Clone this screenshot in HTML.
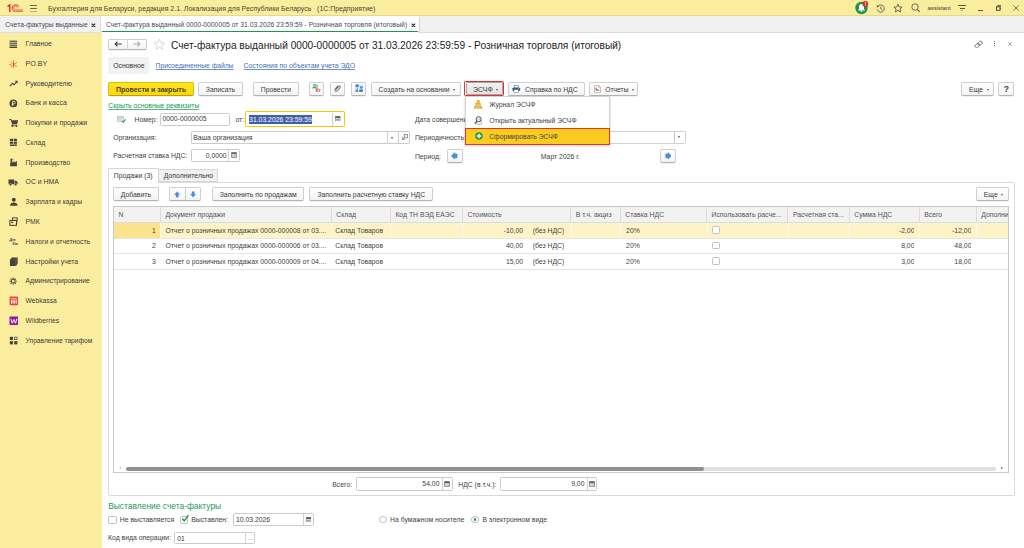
<!DOCTYPE html>
<html lang="ru">
<head>
<meta charset="utf-8">
<title>1C</title>
<style>
*{box-sizing:border-box;margin:0;padding:0}
html,body{width:1024px;height:548px;overflow:hidden;background:#fff}
body{font-family:"Liberation Sans",sans-serif;font-size:6.85px;color:#424242;position:relative;line-height:1}
.a{position:absolute;white-space:nowrap}
.t{position:absolute;white-space:nowrap;line-height:10px;height:10px}
#titlebar{left:0;top:0;width:1024px;height:16.2px;background:#fbed9e;border-bottom:.6px solid #e4d78f}
#tabbar{left:0;top:16.2px;width:1024px;height:17.1px;background:#f1f1f1;border-bottom:.7px solid #dedede}
#sidebar{left:0;top:33.3px;width:102px;height:515px;background:#fbed9e}
.btn{position:absolute;height:14.1px;border:1px solid #cfcfcf;border-bottom-color:#b3b3b3;border-radius:2px;background:linear-gradient(#ffffff,#f3f3f3);text-align:center;line-height:14.6px;white-space:nowrap;color:#3b3b3b;box-shadow:0 .5px .5px rgba(0,0,0,.12)}
.inp{position:absolute;border:1px solid #cbcbcb;border-radius:1.4px;background:#fff;line-height:10px;white-space:nowrap;color:#3b3b3b}
.lnk{color:#3f6fb5;text-decoration:underline;text-decoration-thickness:.5px;text-underline-offset:.8px;text-decoration-color:rgba(63,111,181,.75)}
.sb{position:absolute;left:25.6px;font-size:6.7px;white-space:nowrap;line-height:10px;height:10px;color:#3b3b3b}
.ic{position:absolute}
.th{position:absolute;top:0;height:15.6px;line-height:15px;border-right:1px solid #dcdcdc;padding-left:4.4px;color:#555;white-space:nowrap;overflow:hidden}
.td{position:absolute;height:15.6px;line-height:15.2px;white-space:nowrap;overflow:hidden}
.cb{position:absolute;width:7.8px;height:7.8px;border:1px solid #c2c2c2;border-radius:1.6px;background:#fff}
.dd{display:inline-block;width:0;height:0;border-left:1.7px solid transparent;border-right:1.7px solid transparent;border-top:2.2px solid #555;margin-left:3.4px;vertical-align:1px}
.dda{width:0;height:0;border-left:1.9px solid transparent;border-right:1.9px solid transparent;border-top:2.3px solid #4a4a4a}
</style>
</head>
<body>
<!-- ===== title bar ===== -->
<div class="a" id="titlebar"></div>
<div class="t" style="left:48.1px;top:3.9px;font-size:6.95px;color:#4a4433">Бухгалтерия для Беларуси, редакция 2.1. Локализация для Республики Беларусь&nbsp;&nbsp; (1С:Предприятие)</div>


<!-- 1C logo -->
<svg class="ic" style="left:6.6px;top:3.6px" width="16.6" height="8.8" viewBox="0 0 33.2 17.6">
<g fill="none" stroke="#e5322d">
<path d="M1 5.2L5.6 1.8V17" stroke-width="3"/>
<path d="M24.2 5.6A7.2 7.2 0 1 0 17.4 15.6H32.6" stroke-width="1.8"/>
<path d="M21.2 7.6A4 4 0 1 0 17.4 12H32.6" stroke-width="1.6"/>
</g></svg>
<!-- hamburger -->
<div class="a" style="left:29.8px;top:4.9px;width:7.6px;height:1px;background:#6a6554"></div>
<div class="a" style="left:29.8px;top:7.8px;width:7.6px;height:1px;background:#6a6554"></div>
<div class="a" style="left:29.8px;top:10.5px;width:7.6px;height:.9px;background:#b9b28c"></div>
<!-- right cluster -->
<svg class="ic" style="left:855.4px;top:1.4px" width="14" height="13.4" viewBox="0 0 28 26.8">
<circle cx="13" cy="14" r="12.4" fill="#1d9447"/>
<path d="M13 6.2c-3.2 0-5 2.4-5 5.4v4.2l-2.2 3h14.4l-2.2-3v-4.2c0-3-1.8-5.4-5-5.4z" fill="#fff"/><circle cx="13" cy="20.6" r="1.7" fill="#fff"/>
<circle cx="20.6" cy="5.8" r="5.6" fill="#e3262a"/>
<path d="M19.6 4.2L21 3V9" stroke="#fff" stroke-width="1.5" fill="none"/>
</svg>
<svg class="ic" style="left:875.6px;top:3.6px" width="9.4" height="9.4" viewBox="0 0 18.8 18.8"><g fill="none" stroke="#5a5546" stroke-width="1.7"><path d="M3.4 5.2A7.2 7.2 0 1 1 2.4 10.6"/><path d="M9.6 5V9.8L12.8 12"/></g><path d="M0.8 3L6 3.4L3 7.6Z" fill="#5a5546"/></svg>
<svg class="ic" style="left:893px;top:3px" width="10" height="10" viewBox="0 0 24 24"><path d="M12 2.8L14.8 9.3L21.8 10L16.5 14.6L18.1 21.4L12 17.8L5.9 21.4L7.5 14.6L2.2 10L9.2 9.3Z" fill="none" stroke="#5a5546" stroke-width="2.1" stroke-linejoin="round"/></svg>
<svg class="ic" style="left:911.4px;top:3.4px" width="9.6" height="9.6" viewBox="0 0 19.2 19.2"><circle cx="8" cy="8" r="6.4" fill="none" stroke="#5a5546" stroke-width="1.7"/><path d="M12.6 12.8L17.4 17.6" stroke="#5a5546" stroke-width="2.2"/></svg>
<div class="t" style="left:927.6px;top:3.4px;font-size:5.85px;color:#3f3b30">assistant</div>
<div class="a" style="left:958.2px;top:5.3px;width:8px;height:1px;background:#5a5546"></div>
<div class="a" style="left:959.8px;top:7.8px;width:4.8px;height:1px;background:#5a5546"></div>
<div class="a" style="left:961px;top:10px;width:0;height:0;border-left:1.3px solid transparent;border-right:1.3px solid transparent;border-top:1.6px solid #5a5546"></div>
<div class="a" style="left:978.2px;top:10.4px;width:5px;height:1px;background:#5a5546"></div>
<svg class="ic" style="left:995.8px;top:5.4px" width="5.6" height="5.8" viewBox="0 0 11.2 11.6"><rect x="1" y="3.6" width="7" height="7" fill="none" stroke="#45413a" stroke-width="1.9"/><path d="M3.4 3.4V1H10.2V8H8.2" fill="none" stroke="#45413a" stroke-width="1.6"/></svg>
<svg class="ic" style="left:1013.4px;top:5px" width="6.2" height="6.2" viewBox="0 0 12.4 12.4"><path d="M1 1L11.4 11.4M11.4 1L1 11.4" stroke="#5a5546" stroke-width="1.6"/></svg>

<!-- ===== tab bar ===== -->
<div class="a" id="tabbar"></div>
<div class="t" style="left:5.3px;top:20.2px;font-size:6.75px;color:#484a58">Счета-фактуры выданные</div>
<svg class="ic" style="left:91.2px;top:22.5px" width="4.8" height="4.8" viewBox="0 0 9.6 9.6"><path d="M1.2 1.2L8.4 8.4M8.4 1.2L1.2 8.4" stroke="#333" stroke-width="2.4"/></svg>
<div class="a" style="left:100.2px;top:16.8px;width:.7px;height:16.2px;background:#dcdcdc"></div>
<div class="a" style="left:100.9px;top:16.2px;width:318.4px;height:17.2px;background:#fff"></div>
<div class="a" style="left:419.3px;top:16.8px;width:.7px;height:16.2px;background:#d4d4d4"></div>
<div class="a" style="left:102px;top:30.8px;width:315.9px;height:1.4px;background:#169a48"></div>
<div class="t" style="left:105.9px;top:20.2px;font-size:6.8px;color:#484a58">Счет-фактура выданный 0000-0000005 от 31.03.2026 23:59:59 - Розничная торговля (итоговый)</div>
<svg class="ic" style="left:410.8px;top:22.5px" width="4.8" height="4.8" viewBox="0 0 9.6 9.6"><path d="M1.2 1.2L8.4 8.4M8.4 1.2L1.2 8.4" stroke="#333" stroke-width="2.4"/></svg>

<!-- ===== sidebar ===== -->
<div class="a" id="sidebar"></div>
<!--SB0-->
<svg class="ic" style="left:9.1px;top:39.8px" width="8.6" height="8.6" viewBox="0 0 16 16"><rect x="1" y="1.2" width="14" height="2.1" fill="#46423c"/><rect x="1" y="4.9" width="14" height="2.1" fill="#46423c"/><rect x="1" y="8.6" width="14" height="2.1" fill="#46423c"/><rect x="1" y="12.2" width="14" height="2.8" fill="#46423c"/></svg>
<div class="sb" style="top:39.2px;font-size:6.9px">Главное</div>
<svg class="ic" style="left:9.0px;top:59.5px" width="8.8" height="8.8" viewBox="0 0 16 16"><g stroke="#e23a30" stroke-width="1.25" fill="none" stroke-linecap="round"><path d="M8.2 1.2V14.8"/><path d="M8.2 7.6C10.6 7.2 12.6 6 14 4.6"/><path d="M8.2 8C10 9.4 11.6 11 13.6 11.4"/><path d="M8.2 8C6.8 9.8 5.4 11.2 3.2 12.2"/><path d="M6.2 6.2L3.8 4.4"/><path d="M1.6 8.2H3.4"/></g></svg>
<div class="sb" style="top:59.0px;font-size:7.1px">PO.BY</div>
<svg class="ic" style="left:8.8px;top:79.0px" width="9.2" height="9.2" viewBox="0 0 16 16"><path d="M1.5 12.5L6 7.5L9 10L13.5 4.5" stroke="#46423c" stroke-width="2" fill="none" stroke-linejoin="round"/><path d="M10 3.2H15V8.2Z" fill="#46423c"/></svg>
<div class="sb" style="top:78.7px;font-size:6.95px">Руководителю</div>
<svg class="ic" style="left:9.0px;top:98.9px" width="8.8" height="8.8" viewBox="0 0 16 16"><circle cx="8" cy="8" r="7" fill="#46423c"/><path d="M6.3 12.5V4.2H9.2a2.3 2.3 0 0 1 0 4.6H5.2M5.2 10.6H9" stroke="#fbed9e" stroke-width="1.5" fill="none"/></svg>
<div class="sb" style="top:98.4px;font-size:7.0px">Банк и касса</div>
<svg class="ic" style="left:8.6px;top:118.3px" width="9.6" height="9.6" viewBox="0 0 16 16"><path d="M0.6 1.8H3.8L4.6 3.8H15.4L13.4 10.4H5.4L2.8 3.4H0.6Z" fill="#46423c"/><path d="M5.2 10.4L4.4 12.2H13.6" stroke="#46423c" stroke-width="1.3" fill="none"/><circle cx="5.8" cy="13.6" r="1.6" fill="#46423c"/><circle cx="12.4" cy="13.6" r="1.6" fill="#46423c"/></svg>
<div class="sb" style="top:118.2px;font-size:6.95px">Покупки и продажи</div>
<svg class="ic" style="left:9.0px;top:138.4px" width="8.8" height="8.8" viewBox="0 0 16 16"><rect x="1.6" y="1.4" width="5.8" height="4" fill="#46423c"/><rect x="8.6" y="1.4" width="5.8" height="4" fill="#46423c"/><rect x="1.6" y="6.6" width="5.8" height="4" fill="#46423c"/><rect x="8.6" y="6.6" width="5.8" height="4" fill="#46423c"/><rect x="1.6" y="11.8" width="12.8" height="2.6" fill="#46423c"/></svg>
<div class="sb" style="top:137.9px;font-size:6.75px">Склад</div>
<svg class="ic" style="left:8.9px;top:158.1px" width="9" height="9" viewBox="0 0 16 16"><path d="M2 14.5V8.5L6 5.5V8.5L10 5.5V8.5L14 5.5V14.5Z" fill="#46423c"/><rect x="2.6" y="1.2" width="3" height="5.5" fill="#46423c"/><rect x="6.2" y="1.5" width="1.6" height="1.6" fill="#46423c"/></svg>
<div class="sb" style="top:157.7px;font-size:6.85px">Производство</div>
<svg class="ic" style="left:8.4px;top:177.3px" width="10" height="10" viewBox="0 0 16 16"><path d="M0.8 4H9.8V11.6H0.8Z" fill="#46423c"/><path d="M10.4 6H13.2L15.4 8.6V11.6H10.4Z" fill="#46423c"/><circle cx="4" cy="12" r="1.9" fill="#46423c" stroke="#fbed9e" stroke-width=".7"/><circle cx="12.2" cy="12" r="1.9" fill="#46423c" stroke="#fbed9e" stroke-width=".7"/></svg>
<div class="sb" style="top:177.4px;font-size:6.9px">ОС и НМА</div>
<svg class="ic" style="left:8.6px;top:197.3px" width="9.6" height="9.6" viewBox="0 0 16 16"><circle cx="8" cy="4.6" r="3.3" fill="#46423c"/><path d="M1.8 14.4C1.8 10.4 4.4 9 8 9S14.2 10.4 14.2 14.4Z" fill="#46423c"/></svg>
<div class="sb" style="top:197.2px;font-size:6.75px">Зарплата и кадры</div>
<svg class="ic" style="left:8.8px;top:217.2px" width="9.2" height="9.2" viewBox="0 0 16 16"><rect x="1.6" y="6" width="11.4" height="8.6" fill="none" stroke="#46423c" stroke-width="1.8"/><rect x="6" y="1.4" width="8.2" height="4.4" fill="none" stroke="#46423c" stroke-width="1.6"/><rect x="3.8" y="8.2" width="3.4" height="2.4" fill="#46423c"/><path d="M13.6 5.8V12.5" stroke="#46423c" stroke-width="1.6"/></svg>
<div class="sb" style="top:216.9px;font-size:6.9px">РМК</div>
<svg class="ic" style="left:8.9px;top:237.1px" width="9" height="9" viewBox="0 0 16 16"><text x="1" y="7" font-family="Liberation Sans" font-size="6.6" font-style="italic" font-weight="bold" fill="#46423c">Дт</text><text x="6.4" y="14.2" font-family="Liberation Sans" font-size="6.6" font-style="italic" font-weight="bold" fill="#46423c">Кт</text></svg>
<div class="sb" style="top:236.7px;font-size:6.75px">Налоги и отчетность</div>
<svg class="ic" style="left:8.6px;top:256.6px" width="9.6" height="9.6" viewBox="0 0 16 16"><path d="M1.6 4.6L4.6 1H14.4V11.4L11.4 15H1.6Z" fill="#46423c"/><path d="M11.4 4.6L14.4 1" stroke="#8d8674" stroke-width=".8"/><path d="M11.4 4.6V15" stroke="#8d8674" stroke-width=".7"/><path d="M1.6 4.6H11.4" stroke="#6d675a" stroke-width=".6"/></svg>
<div class="sb" style="top:256.5px;font-size:6.8px">Настройки учета</div>
<svg class="ic" style="left:9.2px;top:276.9px" width="8.4" height="8.4" viewBox="0 0 16 16"><circle cx="8" cy="8" r="3.6" fill="none" stroke="#46423c" stroke-width="2"/><g stroke="#46423c" stroke-width="2"><path d="M8 1V3.6M8 12.4V15M1 8H3.6M12.4 8H15M3.05 3.05L4.9 4.9M11.1 11.1L12.95 12.95M3.05 12.95L4.9 11.1M11.1 4.9L12.95 3.05"/></g></svg>
<div class="sb" style="top:276.2px;font-size:6.72px">Администрирование</div>
<svg class="ic" style="left:8.5px;top:296.0px" width="9.8" height="9.8" viewBox="0 0 16 16"><rect x="1" y="1" width="14" height="14" rx="2" fill="#e8423a"/><rect x="3.2" y="4" width="9.6" height="1.3" fill="#fff"/><g fill="#fff"><rect x="3.4" y="6.6" width="1.3" height="6"/><rect x="6" y="6.6" width="1.3" height="6"/><rect x="8.6" y="6.6" width="1.3" height="6"/><rect x="11.2" y="6.6" width="1.3" height="6"/><rect x="3.4" y="9" width="9" height="1"/></g></svg>
<div class="sb" style="top:296.0px;font-size:6.7px">Webkassa</div>
<svg class="ic" style="left:8.5px;top:315.7px" width="9.8" height="9.8" viewBox="0 0 16 16"><defs><linearGradient id="wb" x1="0" y1="0" x2="1" y2="1"><stop offset="0" stop-color="#7a1fa8"/><stop offset="1" stop-color="#a3188f"/></linearGradient></defs><rect x="0.8" y="0.8" width="14.4" height="14.4" rx="1.2" fill="url(#wb)"/><path d="M3 4.4L5.4 11.8L8 5.6L10.6 11.8L13 4.4" stroke="#fff" stroke-width="1.5" fill="none" stroke-linejoin="round"/></svg>
<div class="sb" style="top:315.7px;font-size:6.7px">Wildberries</div>
<svg class="ic" style="left:8.8px;top:335.8px" width="9.2" height="9.2" viewBox="0 0 16 16"><rect x="1.4" y="1.4" width="5.6" height="5.6" fill="#46423c"/><rect x="9.6" y="2" width="4.4" height="4.4" fill="none" stroke="#46423c" stroke-width="1.2"/><rect x="1.4" y="9" width="5.6" height="5.6" fill="#46423c"/><rect x="9" y="9" width="5.6" height="5.6" fill="#46423c"/></svg>
<div class="sb" style="top:335.5px;font-size:6.66px">Управление тарифом</div>
<!--SB1-->
<!-- ===== main content placeholder ===== -->

<!-- ===== form header ===== -->
<div class="btn" style="left:108px;top:38.5px;width:39px;height:11.9px;border-color:#cdcdcd;border-bottom-color:#b4b4b4"></div>
<div class="a" style="left:127.4px;top:39.2px;width:.8px;height:10.4px;background:#d6d6d6"></div>
<svg class="ic" style="left:114px;top:41.4px" width="8" height="6" viewBox="0 0 16 12"><path d="M15.4 6H3M7 1.4L2.2 6L7 10.6" stroke="#3a3a3a" stroke-width="2.1" fill="none"/></svg>
<svg class="ic" style="left:133.4px;top:41.4px" width="8" height="6" viewBox="0 0 16 12"><path d="M.6 6H13M9 1.4L13.8 6L9 10.6" stroke="#a9a9a9" stroke-width="2.1" fill="none"/></svg>
<svg class="ic" style="left:152.8px;top:37.9px" width="12.8" height="12.4" viewBox="0 0 24 24"><path d="M12 2.5L14.9 9.2L22 9.9L16.6 14.6L18.2 21.6L12 17.9L5.8 21.6L7.4 14.6L2 9.9L9.1 9.2Z" fill="#fff" stroke="#c6c6c6" stroke-width="1.3" stroke-linejoin="round"/></svg>
<div class="a" style="left:171.1px;top:39.8px;font-size:10.17px;line-height:12.5px;color:#222">Счет-фактура выданный 0000-0000005 от 31.03.2026 23:59:59 - Розничная торговля (итоговый)</div>
<svg class="ic" style="left:973.8px;top:39.6px" width="9.4" height="8.8" viewBox="0 0 18.8 17.6"><g transform="rotate(-38 9.4 8.8)" stroke="#6a6a6a" stroke-width="1.6" fill="none"><rect x="1" y="5.6" width="9.6" height="6.4" rx="3.2"/><rect x="8.2" y="5.6" width="9.6" height="6.4" rx="3.2"/></g></svg>
<div class="a" style="left:993.6px;top:41.1px;width:1.3px;height:1.3px;background:#5f5f5f;box-shadow:0 2.15px 0 #5f5f5f,0 4.3px 0 #5f5f5f"></div>
<svg class="ic" style="left:1008.2px;top:42px" width="4.2" height="4.2" viewBox="0 0 8.4 8.4"><path d="M.8 .8L7.6 7.6M7.6 .8L.8 7.6" stroke="#787878" stroke-width="1.5"/></svg>

<!-- sub tabs -->
<div class="a" style="left:108px;top:56.8px;width:41.2px;height:17.6px;background:#f2f2f2;border-radius:1.6px"></div>
<div class="t" style="left:113.2px;top:61.3px;color:#333">Основное</div>
<div class="t lnk" style="left:155.6px;top:61.3px;font-size:6.72px">Присоединенные файлы</div>
<div class="t lnk" style="left:243.6px;top:61.3px">Состояния по объектам учета ЭДО</div>

<!-- command bar -->
<div class="btn" style="left:108px;top:81.5px;width:86px;background:linear-gradient(#ffe521,#fbd90a);border-color:#dcbc00;border-bottom-color:#bfa000;font-weight:bold;font-size:7px;color:#4a4126">Провести и закрыть</div>
<div class="btn" style="left:198.2px;top:81.5px;width:44.6px">Записать</div>
<div class="btn" style="left:253.2px;top:81.5px;width:45.4px">Провести</div>
<div class="btn" style="left:308.8px;top:81.5px;width:15.4px"></div>
<div class="btn" style="left:329.8px;top:81.5px;width:15.4px"></div>
<div class="btn" style="left:350.6px;top:81.5px;width:15.4px"></div>
<div class="btn" style="left:371px;top:81.5px;width:89.6px;text-align:left;padding-left:6.6px">Создать на основании<span class="dd"></span></div>
<div class="btn" style="left:465.6px;top:82px;width:37px;height:13px;line-height:13.4px;text-align:left;padding-left:6.4px;background:linear-gradient(#f1f1f1,#e4e4e4);border-color:#a8a8a8;border-radius:1px;font-size:7px">ЭСЧФ<span class="dd"></span></div>
<div class="btn" style="left:508.4px;top:81.5px;width:76.2px;text-align:left;padding-left:15.6px">Справка по НДС</div>
<div class="btn" style="left:589px;top:81.5px;width:49px;text-align:left;padding-left:15.2px;font-size:6.78px">Отчеты<span class="dd"></span></div>
<div class="btn" style="left:961.2px;top:81.5px;width:32.8px;text-align:left;padding-left:6.8px">Еще<span class="dd" style="margin-left:4.4px"></span></div>
<div class="btn" style="left:998.4px;top:81.5px;width:15.8px;font-weight:bold;color:#3a3a3a;font-size:8.6px;line-height:13.6px">?</div>

<div class="t" style="left:108.3px;top:101.3px;color:#14994f;text-decoration:underline;text-decoration-thickness:.45px;text-underline-offset:.6px;text-decoration-color:rgba(20,153,79,.7);font-size:6.83px">Скрыть основные реквизиты</div>

<!-- fields left -->
<div class="t" style="left:134.6px;top:115px">Номер:</div>
<div class="inp" style="left:160px;top:112.8px;width:69.6px;height:12.8px;padding:.3px 1.4px">0000-0000005</div>
<div class="t" style="left:235.4px;top:115px">от:</div>
<div class="a" style="left:245.2px;top:111.4px;width:100px;height:15.8px;border:1.3px solid #f5c800;border-radius:1.4px;background:#fff"></div>
<div class="a" style="left:248.9px;top:115px;width:63px;height:8.6px;background:#3f5fa8"></div>
<div class="t" style="left:249.1px;top:114.5px;color:#fff">31.03.2026 23:59:59</div>
<div class="a" style="left:332.3px;top:113px;width:.8px;height:12.6px;background:#d0d0d0"></div>

<div class="t" style="left:113.2px;top:133px">Организация:</div>
<div class="inp" style="left:191px;top:131px;width:207.6px;height:12.6px;padding:.5px 1.2px;border-radius:1.4px 0 0 1.4px">Ваша организация</div>
<div class="a" style="left:387.2px;top:131.6px;width:.8px;height:11.4px;background:#d0d0d0"></div>
<div class="inp" style="left:398.2px;top:131px;width:11.6px;height:12.6px;border-radius:0 1.4px 1.4px 0"></div>
<div class="a dda" style="left:390.5px;top:136.5px"></div>

<div class="t" style="left:113.2px;top:151px">Расчетная ставка НДС:</div>
<div class="inp" style="left:191px;top:149.3px;width:49px;height:12.4px;padding:.6px 12.4px .5px 0;text-align:right">0,0000</div>
<div class="a" style="left:228.2px;top:149.8px;width:.8px;height:11.2px;background:#d0d0d0"></div>


<!-- command bar icons -->
<div class="a" style="left:312.4px;top:83.6px;font-size:4.9px;font-weight:bold;color:#1f9a4c;line-height:5px;letter-spacing:-.2px">Дт</div>
<div class="a" style="left:315.8px;top:88.3px;font-size:4.5px;font-weight:bold;color:#e8353a;line-height:5px;letter-spacing:-.1px">Кт</div>
<svg class="ic" style="left:333.2px;top:83.9px" width="9" height="9" viewBox="0 0 18 18"><g transform="rotate(42 9 9)"><path d="M6.2 5.2V12.4a2.8 2.8 0 0 0 5.6 0V4.4a1.9 1.9 0 0 0-3.8 0V11.6" fill="none" stroke="#6c6c6c" stroke-width="1.9" stroke-linecap="round"/></g></svg>
<svg class="ic" style="left:354.6px;top:84.3px" width="8.4" height="8.4" viewBox="0 0 16.8 17.2"><rect x=".6" y=".6" width="15.6" height="16" fill="#dfeaf8"/><rect x="1" y="1" width="6.4" height="4.6" fill="#3f74c4"/><rect x="9.6" y="4.6" width="6.2" height="4.4" fill="#5a8ed6"/><rect x="1" y="11.4" width="5" height="4.6" fill="#4a80cc"/><rect x="8.4" y="11.8" width="7.4" height="4.4" fill="#3f74c4"/><path d="M4 5.6V9H9M12.4 9V11.8" stroke="#2f62ae" stroke-width="1.3" fill="none"/><rect x="6" y="6.4" width="3" height="4.2" fill="#fff"/><rect x="11.6" y="10.2" width="1.8" height="1.8" fill="#3db36b"/></svg>
<svg class="ic" style="left:512px;top:84.8px" width="8.6" height="8" viewBox="0 0 17.2 16.4"><rect x="4.2" y=".8" width="8.8" height="5" fill="#fff" stroke="#5a6b86" stroke-width="1.2"/><rect x=".8" y="5.4" width="15.6" height="6.8" rx="1.4" fill="#3d5580"/><rect x="3.8" y="9.6" width="9.6" height="6" fill="#fff" stroke="#5a6b86" stroke-width="1.1"/><rect x="12.8" y="6.8" width="1.8" height="1.3" fill="#cfe0ff"/></svg>
<svg class="ic" style="left:594px;top:84.6px" width="7" height="8" viewBox="0 0 14 16.4"><path d="M1 .8H9.4L13 4.4V15.6H1Z" fill="#fff" stroke="#8d8d8d" stroke-width="1.2"/><path d="M9.2 1V4.6H12.8" fill="none" stroke="#8d8d8d" stroke-width="1"/><rect x="3.2" y="5.4" width="2.2" height="6.4" fill="#d9343a"/><rect x="6.2" y="8" width="2.2" height="3.8" fill="#3aa655"/><rect x="9" y="9.6" width="1.8" height="2.2" fill="#d9343a"/></svg>

<!-- field icons -->
<svg class="ic" style="left:116.8px;top:116.2px" width="9.2" height="7" viewBox="0 0 18.4 14"><rect x=".6" y=".8" width="12.6" height="9.6" fill="#f1f1f1" stroke="#9f9f9f" stroke-width="1"/><path d="M2.4 3.4H11.4M2.4 5.6H11.4M2.4 7.8H8" stroke="#a9a9a9" stroke-width="1"/><path d="M9.6 9.6L12.4 12.4L17.4 6.6" fill="none" stroke="#27a24c" stroke-width="2.3"/></svg>
<svg class="ic cal" style="left:335.2px;top:116.1px" width="5.4" height="5.3" viewBox="0 0 12 11.6"><rect x=".7" y=".7" width="10.6" height="10.2" rx="1" fill="#fff" stroke="#4d4d4d" stroke-width="1.4"/><rect x=".7" y=".7" width="10.6" height="3.4" fill="#4d4d4d"/><rect x="2.6" y="5.6" width="6.8" height="3.4" fill="#9a9a9a"/></svg>
<svg class="ic" style="left:401.6px;top:134.2px" width="6" height="6.2" viewBox="0 0 12 12.4"><rect x="4.4" y=".8" width="6.8" height="6.8" fill="none" stroke="#6a6a6a" stroke-width="1.4"/><path d="M1 11.4L5.4 7" stroke="#6a6a6a" stroke-width="1.6"/><path d="M1 5.4V11.4H7" stroke="#6a6a6a" stroke-width="1.2" fill="none"/></svg>
<svg class="ic" style="left:231px;top:152px" width="5.8" height="5.8" viewBox="0 0 11.6 11.6"><rect x=".7" y=".7" width="10.2" height="10.2" rx=".8" fill="#c9c9c9" stroke="#5e5e5e" stroke-width="1.3"/><rect x="1.2" y="1.2" width="9.2" height="2.6" fill="#5e5e5e"/><path d="M2.6 6.2H9M2.6 8.4H9" stroke="#f2f2f2" stroke-width="1.1" stroke-dasharray="1.4 1"/></svg>

<!-- fields right -->
<div class="t" style="left:414.9px;top:114.6px">Дата совершения:</div>
<div class="t" style="left:414.9px;top:132.9px">Периодичность:</div>
<div class="inp" style="left:470px;top:130.6px;width:216.4px;height:13.2px;border-color:#d2d2d2"></div>
<div class="a" style="left:674.3px;top:131.2px;width:.8px;height:12px;background:#c8c8c8"></div>
<div class="a dda" style="left:678.2px;top:136.3px"></div>
<div class="t" style="left:414.9px;top:151.8px">Период:</div>
<div class="btn" style="left:446.6px;top:149.2px;width:16px;height:13.4px"></div>
<svg class="ic" style="left:451.3px;top:151.7px" width="6.8" height="7.8" viewBox="0 0 14 13.6" preserveAspectRatio="none"><path d="M.8 6.8L7.6.8V3.4H12.6V10.2H7.6V12.8Z" fill="#4a8fdb" stroke="#3a78c2" stroke-width=".8"/></svg>
<div class="btn" style="left:660.2px;top:149.2px;width:15.8px;height:13.4px"></div>
<svg class="ic" style="left:664.7px;top:151.7px" width="6.8" height="7.8" viewBox="0 0 14 13.6" preserveAspectRatio="none"><path d="M13.2 6.8L6.4.8V3.4H1.4V10.2H6.4V12.8Z" fill="#4a8fdb" stroke="#3a78c2" stroke-width=".8"/></svg>
<div class="t" style="left:540.8px;top:151.8px">Март 2026 г.</div>


<!-- ===== pages (tabs) ===== -->
<div class="a" style="left:108px;top:182px;width:906.9px;height:314.2px;border:1px solid #dadada;border-radius:0 1.4px 1.4px 1.4px;background:#fff"></div>
<div class="a" style="left:158.8px;top:168.7px;width:59.4px;height:13.8px;background:#f1f1f1;border:1px solid #d6d6d6;border-left:none;border-radius:0 1.4px 0 0"></div>
<div class="a" style="left:108px;top:167.9px;width:51.2px;height:15.1px;background:#fff;border:1px solid #d6d6d6;border-bottom:none;border-radius:1.4px 1.4px 0 0"></div>
<div class="t" style="left:113.8px;top:170.8px;color:#3a3a3a">Продажи (3)</div>
<div class="t" style="left:163.8px;top:170.8px;color:#3a3a3a">Дополнительно</div>

<div class="btn" style="left:112.9px;top:187.2px;width:45.9px;height:14px;line-height:13.7px">Добавить</div>
<div class="btn" style="left:169.4px;top:187.2px;width:31.6px;height:14px"></div>
<div class="a" style="left:185.1px;top:188px;width:.8px;height:12.4px;background:#cfcfcf"></div>
<svg class="ic" style="left:174.1px;top:191.4px" width="6.2" height="6.8" viewBox="0 0 16 17"><path d="M8 1.5L14.6 9H10.8V15.4H5.2V9H1.4Z" fill="#4a90e0" stroke="#3b7ccc" stroke-width="1"/></svg>
<svg class="ic" style="left:190px;top:191.4px" width="6.2" height="6.8" viewBox="0 0 16 17"><path d="M8 15.5L14.6 8H10.8V1.6H5.2V8H1.4Z" fill="#4a90e0" stroke="#3b7ccc" stroke-width="1"/></svg>
<div class="btn" style="left:212px;top:187.2px;width:92.4px;height:14px;line-height:13.7px">Заполнить по продажам</div>
<div class="btn" style="left:309.2px;top:187.2px;width:124.2px;height:14px;line-height:13.7px">Заполнить расчетную ставку НДС</div>
<div class="btn" style="left:976.2px;top:187.3px;width:32.4px;height:14px;line-height:13.7px;text-align:left;padding-left:6.6px">Еще<span class="dd"></span></div>

<!-- table -->
<div class="a" style="left:113.1px;top:206.2px;width:895.5px;height:266.4px;border:1px solid #c9c9c9;background:#fff;overflow:hidden">
<div class="a" style="left:0;top:0;width:895.0px;height:15.6px;background:#f2f2f2;border-bottom:1px solid #dcdcdc"></div>
<div class="th" style="left:0.0px;width:46.9px">N</div>
<div class="th" style="left:46.9px;width:170.9px">Документ продажи</div>
<div class="th" style="left:217.8px;width:59.1px">Склад</div>
<div class="th" style="left:276.9px;width:72.0px">Код ТН ВЭД ЕАЭС</div>
<div class="th" style="left:348.9px;width:108.4px">Стоимость</div>
<div class="th" style="left:457.3px;width:49.5px">В т.ч. акциз</div>
<div class="th" style="left:506.8px;width:86.2px">Ставка НДС</div>
<div class="th" style="left:593.0px;width:81.4px">Использовать расче...</div>
<div class="th" style="left:674.4px;width:61.4px">Расчетная ста...</div>
<div class="th" style="left:735.8px;width:69.9px">Сумма НДС</div>
<div class="th" style="left:805.7px;width:57.0px">Всего</div>
<div class="th" style="left:862.7px;width:32.1px;border-right:none">Дополни</div>
<div class="a" style="left:0;top:15.6px;width:893.6px;height:15.6px;background:#fdf3c6"></div>
<div class="a" style="left:0;top:15.6px;width:46.9px;height:15.6px;background:#fce48e"></div>
<div class="a" style="left:46.4px;top:15.6px;width:.7px;height:15.6px;background:#fffbe8"></div>
<div class="a" style="left:217.3px;top:15.6px;width:.7px;height:15.6px;background:#fffbe8"></div>
<div class="a" style="left:276.4px;top:15.6px;width:.7px;height:15.6px;background:#fffbe8"></div>
<div class="a" style="left:348.4px;top:15.6px;width:.7px;height:15.6px;background:#fffbe8"></div>
<div class="a" style="left:456.8px;top:15.6px;width:.7px;height:15.6px;background:#fffbe8"></div>
<div class="a" style="left:506.3px;top:15.6px;width:.7px;height:15.6px;background:#fffbe8"></div>
<div class="a" style="left:592.5px;top:15.6px;width:.7px;height:15.6px;background:#fffbe8"></div>
<div class="a" style="left:673.9px;top:15.6px;width:.7px;height:15.6px;background:#fffbe8"></div>
<div class="a" style="left:735.3px;top:15.6px;width:.7px;height:15.6px;background:#fffbe8"></div>
<div class="a" style="left:805.2px;top:15.6px;width:.7px;height:15.6px;background:#fffbe8"></div>
<div class="a" style="left:862.2px;top:15.6px;width:.7px;height:15.6px;background:#fffbe8"></div>
<div class="a" style="left:0;top:30.6px;width:893.6px;height:.7px;background:#e6e6e6"></div>
<div class="td" style="left:0;top:15.6px;width:41.8px;text-align:right">1</div>
<div class="td" style="left:51.3px;top:15.6px;width:166px">Отчет о розничных продажах 0000-000008 от 03....</div>
<div class="td" style="left:221.2px;top:15.6px">Склад Товаров</div>
<div class="td" style="left:348.9px;top:15.6px;width:60.1px;text-align:right">-10,00</div>
<div class="td" style="left:418.6px;top:15.6px">(без НДС)</div>
<div class="td" style="left:512.0px;top:15.6px">20%</div>
<div class="cb" style="left:597.7px;top:18.9px"></div>
<div class="td" style="left:735.8px;top:15.6px;width:64.6px;text-align:right">-2,00</div>
<div class="td" style="left:805.7px;top:15.6px;width:51.7px;text-align:right">-12,00</div>
<div class="a" style="left:0;top:46.2px;width:893.6px;height:.7px;background:#e6e6e6"></div>
<div class="td" style="left:0;top:31.2px;width:41.8px;text-align:right">2</div>
<div class="td" style="left:51.3px;top:31.2px;width:166px">Отчет о розничных продажах 0000-000006 от 03....</div>
<div class="td" style="left:221.2px;top:31.2px">Склад Товаров</div>
<div class="td" style="left:348.9px;top:31.2px;width:60.1px;text-align:right">40,00</div>
<div class="td" style="left:418.6px;top:31.2px">(без НДС)</div>
<div class="td" style="left:512.0px;top:31.2px">20%</div>
<div class="cb" style="left:597.7px;top:34.5px"></div>
<div class="td" style="left:735.8px;top:31.2px;width:64.6px;text-align:right">8,00</div>
<div class="td" style="left:805.7px;top:31.2px;width:51.7px;text-align:right">48,00</div>
<div class="a" style="left:0;top:61.8px;width:893.6px;height:.7px;background:#e6e6e6"></div>
<div class="td" style="left:0;top:46.8px;width:41.8px;text-align:right">3</div>
<div class="td" style="left:51.3px;top:46.8px;width:166px">Отчет о розничных продажах 0000-000009 от 04....</div>
<div class="td" style="left:221.2px;top:46.8px">Склад Товаров</div>
<div class="td" style="left:348.9px;top:46.8px;width:60.1px;text-align:right">15,00</div>
<div class="td" style="left:418.6px;top:46.8px">(без НДС)</div>
<div class="td" style="left:512.0px;top:46.8px">20%</div>
<div class="cb" style="left:597.7px;top:50.1px"></div>
<div class="td" style="left:735.8px;top:46.8px;width:64.6px;text-align:right">3,00</div>
<div class="td" style="left:805.7px;top:46.8px;width:51.7px;text-align:right">18,00</div>
<!-- scrollbar -->
<div class="a" style="left:12.2px;top:259.4px;width:869.6px;height:4px;background:#e0e0e0;border-radius:2px"></div>
<div class="a" style="left:12.2px;top:259.4px;width:577.6px;height:4px;background:#909090;border-radius:2px"></div>
<div class="a" style="left:5.4px;top:259.8px;width:0;height:0;border-top:1.7px solid transparent;border-bottom:1.7px solid transparent;border-right:2.2px solid #b5b5b5"></div>
<div class="a" style="left:887.4px;top:259.8px;width:0;height:0;border-top:1.7px solid transparent;border-bottom:1.7px solid transparent;border-left:2.2px solid #4a4a4a"></div>
</div>

<!-- totals -->
<div class="t" style="left:332.3px;top:479.5px">Всего:</div>
<div class="inp" style="left:356px;top:477.3px;width:96.5px;height:13.3px;padding:1.2px 12px 0 0;text-align:right">54,00</div>
<div class="a" style="left:441.5px;top:477.9px;width:.8px;height:12.1px;background:#d0d0d0"></div>
<svg class="ic" style="left:443.9px;top:480.6px" width="5.8" height="6.2" viewBox="0 0 11.6 11.6" preserveAspectRatio="none"><rect x=".7" y=".7" width="10.2" height="10.2" rx=".8" fill="#c9c9c9" stroke="#5e5e5e" stroke-width="1.3"/><rect x="1.2" y="1.2" width="9.2" height="2.6" fill="#5e5e5e"/><path d="M2.6 6.2H9M2.6 8.4H9" stroke="#f2f2f2" stroke-width="1.1" stroke-dasharray="1.4 1"/></svg>
<div class="t" style="left:458.2px;top:479.5px">НДС (в т.ч.):</div>
<div class="inp" style="left:500.2px;top:477.3px;width:97.3px;height:13.3px;padding:1.2px 12px 0 0;text-align:right">9,00</div>
<div class="a" style="left:586.5px;top:477.9px;width:.8px;height:12.1px;background:#d0d0d0"></div>
<svg class="ic" style="left:589px;top:480.6px" width="5.8" height="6.2" viewBox="0 0 11.6 11.6" preserveAspectRatio="none"><rect x=".7" y=".7" width="10.2" height="10.2" rx=".8" fill="#c9c9c9" stroke="#5e5e5e" stroke-width="1.3"/><rect x="1.2" y="1.2" width="9.2" height="2.6" fill="#5e5e5e"/><path d="M2.6 6.2H9M2.6 8.4H9" stroke="#f2f2f2" stroke-width="1.1" stroke-dasharray="1.4 1"/></svg>

<!-- bottom group -->
<div class="t" style="left:108.2px;top:501.2px;font-size:8.43px;color:#1f9a57">Выставление счета-фактуры</div>
<div class="cb" style="left:108.4px;top:515.5px;width:8.2px;height:8.2px"></div>
<div class="t" style="left:119.8px;top:514.6px">Не выставляется</div>
<div class="cb" style="left:180px;top:515.5px;width:8.2px;height:8.2px"></div>
<svg class="ic" style="left:180.8px;top:513.6px" width="8.6" height="8.8" viewBox="0 0 16 16"><path d="M2.4 8.2L6 12.6L13.8 1.8" stroke="#169a42" stroke-width="2.5" fill="none"/></svg>
<div class="t" style="left:191.2px;top:514.6px">Выставлен:</div>
<div class="inp" style="left:233px;top:513.2px;width:80.8px;height:12.6px;padding:.9px 1.9px">10.03.2026</div>
<div class="a" style="left:302.6px;top:513.8px;width:.8px;height:11.4px;background:#d0d0d0"></div>
<svg class="ic" style="left:305.5px;top:516.5px" width="5.4" height="5.3" viewBox="0 0 12 11.6"><rect x=".7" y=".7" width="10.6" height="10.2" rx="1" fill="#fff" stroke="#4d4d4d" stroke-width="1.4"/><rect x=".7" y=".7" width="10.6" height="3.4" fill="#4d4d4d"/><rect x="2.6" y="5.6" width="6.8" height="3.4" fill="#9a9a9a"/></svg>
<div class="a" style="left:379.3px;top:515.5px;width:7.8px;height:7.8px;border:1px solid #bcbcbc;border-radius:50%;background:#fff"></div>
<div class="t" style="left:390px;top:514.6px">На бумажном носителе</div>
<div class="a" style="left:471.2px;top:515.5px;width:7.8px;height:7.8px;border:1px solid #b4b4b4;border-radius:50%;background:#fff"></div>
<div class="a" style="left:473.7px;top:518px;width:2.8px;height:2.8px;border-radius:50%;background:#12943f"></div>
<div class="t" style="left:482.4px;top:514.6px">В электронном виде</div>
<div class="t" style="left:108px;top:533.4px">Код вида операции:</div>
<div class="inp" style="left:174.2px;top:531.9px;width:81.3px;height:11.9px;padding:.8px 2px">01</div>
<div class="a" style="left:244.6px;top:532.5px;width:.8px;height:10.7px;background:#d4d4d4"></div>
<div class="t" style="left:247.6px;top:533.2px;color:#9a9a9a;letter-spacing:.2px">...</div>

<!-- ===== dropdown menu ===== -->
<div class="a" style="left:465.4px;top:95.6px;width:144.4px;height:49.6px;background:#fff;border:1px solid #d2d2d2;box-shadow:0 1px 2.5px rgba(0,0,0,.2)"></div>
<div class="a" style="left:464.3px;top:80.8px;width:39.6px;height:15.3px;border:1.3px solid #e0302e;border-radius:1.2px"></div>
<!-- journal icon -->
<svg class="ic" style="left:474.4px;top:100px" width="8.4" height="9" viewBox="0 0 16.8 18"><g fill="#f6bd2c" stroke="#cf9210" stroke-width=".8"><rect x="6" y=".8" width="4.8" height="3.6"/><rect x="3.4" y="7" width="4" height="3.2"/><rect x="9.4" y="7" width="4" height="3.2"/><rect x=".8" y="13.6" width="4" height="3.4"/><rect x="6.4" y="13.6" width="4" height="3.4"/><rect x="12" y="13.6" width="4" height="3.4"/></g><path d="M8.4 4.4V5.8M5.4 7V5.8H11.4V7M5.4 10.2V11.8M2.8 13.6V11.8H8.4V13.6M11.4 10.2V11.8H14V13.6" stroke="#cf9210" stroke-width=".9" fill="none"/></svg>
<!-- open-actual icon -->
<svg class="ic" style="left:474.4px;top:115.6px" width="8.6" height="9.4" viewBox="0 0 17.2 18.8"><rect x="5" y="8" width="10.4" height="8.8" fill="#e9e9e9" stroke="#9b9b9b" stroke-width="1"/><circle cx="9.2" cy="6.4" r="5" fill="#f7f7f7" stroke="#4f4f4f" stroke-width="2"/><path d="M5.4 10.6L1.6 15.4" stroke="#4f4f4f" stroke-width="2.6"/><path d="M6.6 6.4H11.8" stroke="#9a9a9a" stroke-width="1.2"/></svg>
<div class="t" style="left:489.2px;top:100px;color:#444">Журнал ЭСЧФ</div>
<div class="t" style="left:489.2px;top:115.9px;color:#444">Открыть актуальный ЭСЧФ</div>
<div class="a" style="left:465.4px;top:128.2px;width:144.4px;height:16.6px;background:#fbcb1f;border:1.2px solid #e0342c"></div>
<svg class="ic" style="left:474.6px;top:132.4px" width="8" height="8" viewBox="0 0 16 16"><circle cx="8" cy="8" r="7.2" fill="#2fa24f" stroke="#1d8a3d" stroke-width="1"/><path d="M8 3.6V12.4M3.6 8H12.4" stroke="#fff" stroke-width="2.6"/></svg>
<div class="t" style="left:489.2px;top:131.8px;color:#444;font-size:6.78px">Сформировать ЭСЧФ</div>

<div id="main3"></div>
</body>
</html>
